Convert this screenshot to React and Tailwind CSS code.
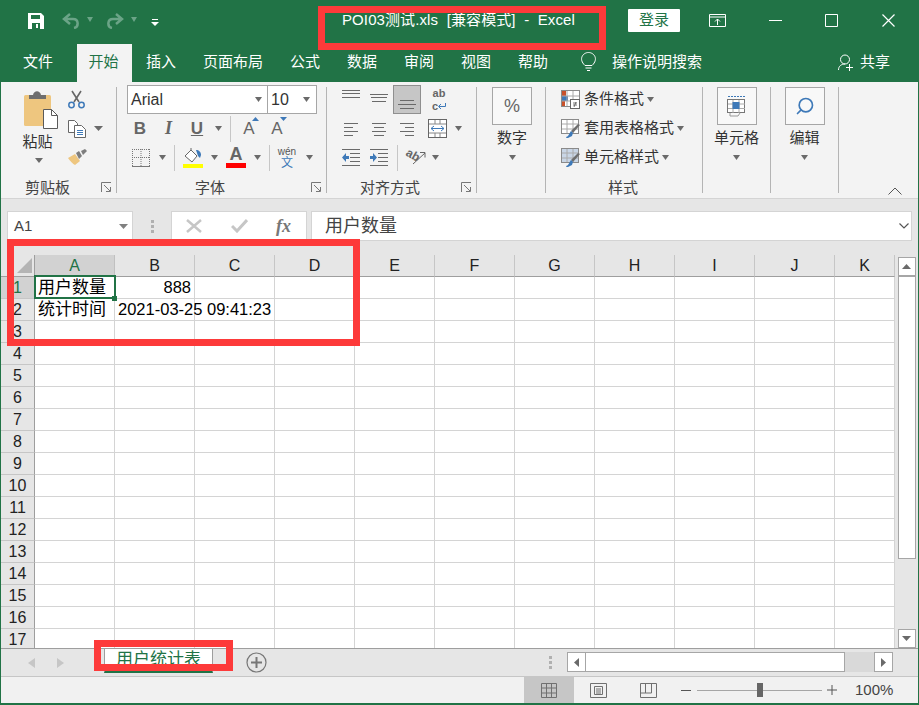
import { Search } from "lucide-react";

const FONT = "font-['Liberation_Sans','Noto_Sans_CJK_SC',sans-serif]";
const COLS = ["A", "B", "C", "D", "E", "F", "G", "H", "I", "J", "K"];
const ROWS = Array.from({ length: 17 }, (_, i) => i + 1);

const Caret = ({ color = "#6a6a6a", w = 9 }) => (
  <svg width={w} height="5" viewBox="0 0 9 5" preserveAspectRatio="none">
    <path d="M0 0h9L4.500 5z" fill={color} />
  </svg>
);

const Slot = ({ className = "", children }) => (
  <div className={`flex h-full shrink-0 items-center justify-center ${className}`}>{children}</div>
);

const Row = ({ className = "", children }) => (
  <div className={`flex h-[29px] items-center ${className}`}>{children}</div>
);

const VSep = ({ className = "" }) => <div className={`h-[26px] w-px shrink-0 bg-[#c6c6c6] ${className}`} />;

const Launcher = () => (
  <svg width="11" height="11" viewBox="0 0 11 11" fill="none" stroke="#777">
    <path d="M.5 10V.5H10M3 3l6 6M9.500 5v4.500H5" />
  </svg>
);

const Group = ({ className = "", label, launcher, labelClass = "", children }) => (
  <div className={`flex h-full shrink-0 ${className}`}>
    <div className="flex min-w-0 flex-1 flex-col">
      <div className="h-[90px]">{children}</div>
      <div className="mt-[4px] flex h-[22px] items-center text-[15px] leading-none text-[#444]">
        <span className={labelClass}>{label}</span>
        {launcher && (
          <span className="mr-[4px] ml-auto flex">
            <Launcher />
          </span>
        )}
      </div>
    </div>
    <div className="mt-[2px] h-[106px] w-px shrink-0 bg-[#b4b4b4]" />
  </div>
);

// three or four text lines drawn in a 29px high row
const Lines = ({ lines }) => (
  <svg width="18" height="29" viewBox="0 0 18 29" stroke="#6a6a6a">
    {lines.map(([a, b, y]) => (
      <path key={y} d={`M${a} ${y + 0.5}H${b}`} />
    ))}
  </svg>
);

const Indent = ({ flip }) => (
  <svg width="18" height="17" viewBox="0 0 18 17">
    <g stroke="#6a6a6a">
      <path d="M0 .5h18M8 4.500h10M8 8.500h10M8 12.500h10M0 16.500h18" />
    </g>
    {flip ? (
      <path d="M0 7h3V4l4 4.500-4 4.500V10H0z" fill="#3e79b8" />
    ) : (
      <path d="M7 7H4V4L0 8.500 4 13v-3h3z" fill="#3e79b8" />
    )}
  </svg>
);

const PasteIcon = () => (
  <svg width="34" height="39" viewBox="0 0 34 39">
    <rect x="0" y="5" width="27" height="31" rx="1.500" fill="#eec67f" />
    <path d="M5 9V5h4c1-5 7-5 8 0h5v4z" fill="#6e6e6e" />
    <path d="M19.500 19.500h8l6 6v13h-14z" fill="#fff" stroke="#5a5a5a" />
    <path d="M27.500 19.500v6h6" fill="none" stroke="#5a5a5a" />
  </svg>
);

const Scissors = () => (
  <svg width="17" height="19" viewBox="0 0 17 19" fill="none">
    <path d="M4 1l7 11M13 1L6 12" stroke="#666" strokeWidth="1.600" />
    <circle cx="3.500" cy="15" r="2.700" stroke="#3e79b8" strokeWidth="1.500" />
    <circle cx="13.500" cy="15" r="2.700" stroke="#3e79b8" strokeWidth="1.500" />
  </svg>
);

const CopyIcon = () => (
  <svg width="18" height="18" viewBox="0 0 18 18" fill="#fff" stroke="#666">
    <path d="M.5.5h6l3 3v9h-9z" />
    <path d="M6.500 5.500h7l4 4v8h-11z" />
    <path d="M9 10.500h6M9 12.500h6M9 14.500h6" stroke="#3e79b8" />
  </svg>
);

const BrushIcon = () => (
  <svg width="19" height="17" viewBox="0 0 19 17">
    <path d="M0 9l7-4 5 7-5 4c-2-1-5-4-7-7z" fill="#eec67f" />
    <path d="M8 4l3-2 3 5-3 3z" fill="#7d7d7d" />
    <path d="M13 2l4-2 2 2-4 4z" fill="#7d7d7d" />
  </svg>
);

const BorderIcon = () => (
  <svg width="18" height="18" viewBox="0 0 18 18" fill="none" stroke="#777" strokeDasharray="1 1">
    <path d="M.5 0v17M9 0v17M17.500 0v17M0 .5h18M0 8.500h18" />
    <path d="M0 17.500h18" strokeDasharray="none" />
  </svg>
);

const FillIcon = () => (
  <svg width="20" height="20" viewBox="0 0 20 20">
    <path d="M2 8l6-6 6 6-5 6z" fill="#fff" stroke="#666" />
    <path d="M8 2V0" stroke="#666" />
    <path d="M13 2c3 0 5 2 5 5l-1 3-2-2z" fill="#3e79b8" />
    <rect x="0" y="16" width="20" height="4" fill="#ffff00" />
  </svg>
);

const TableCellIcon = () => (
  <svg width="19" height="19" viewBox="0 0 19 19">
    <rect x=".5" y=".5" width="18" height="16" fill="#fff" stroke="#8a8a8a" />
    <rect x="1" y="1" width="4" height="5" fill="#c8512b" />
    <rect x="1" y="6" width="6" height="5" fill="#3e79b8" />
    <rect x="1" y="11" width="3" height="5" fill="#c8512b" />
    <path d="M6 1v15M12 1v15M1 6h17M1 11h17" stroke="#aaa" />
    <rect x="9.500" y="9.500" width="9" height="9" fill="#fff" stroke="#666" />
    <path d="M12 13h4M12 15h4M15 12l-2 5" stroke="#555" strokeWidth=".8" />
  </svg>
);

const TableBrushIcon = ({ fill = "#fff" }) => (
  <svg width="19" height="20" viewBox="0 0 19 20">
    <rect x=".5" y=".5" width="17" height="14" fill={fill} stroke="#8a8a8a" />
    <path d="M1 5h16M1 10h16M6 1v13M12 1v13" stroke="#aaa" />
    <path d="M17 5l2 1-7 8-2-2z" fill="#6e6e6e" />
    <path d="M10 12l2 2-1 3-4 2c-1 0-2 0-2-1 2 0 3-3 5-6z" fill="#3e79b8" />
  </svg>
);

const SheetCellsIcon = () => (
  <svg width="19" height="23" viewBox="0 0 19 23" fill="none">
    <path d="M1 1.500h17" stroke="#3e79b8" strokeDasharray="2 1" />
    <rect x=".5" y="4.500" width="17" height="13" fill="#fff" stroke="#777" />
    <path d="M1 9h17M1 13.500h17M6 5v13M12 5v13" stroke="#aaa" />
    <rect x="5.500" y="7" width="7" height="7" fill="#3e79b8" />
    <path d="M3 18v3h8l2-3" stroke="#999" />
  </svg>
);

const StdBox = ({ children }) => (
  <div className="flex h-[38px] w-[40px] items-center justify-center border border-[#a6a6a6] bg-[#f8f8f8]">
    {children}
  </div>
);

const Ribbon = () => (
  <div className="flex h-[117px] border-b border-[#d4d4d4] bg-[#f3f3f3] pt-[3px]">
    {/* 剪贴板 */}
    <Group className="w-[116px]" label="剪贴板" labelClass="ml-[24px]" launcher>
      <div className="flex h-full">
        <div className="ml-[22px] flex w-[35px] flex-col items-center pt-[5px]">
          <PasteIcon />
          <span className="mt-[3px] mr-[6px] text-[15px] leading-[20px] whitespace-nowrap text-[#333]">粘贴</span>
          <span className="mt-[6px] mr-[3px] flex">
            <Caret w={8} />
          </span>
        </div>
        <div className="ml-[10px] flex flex-col">
          <Row>
            <Scissors />
          </Row>
          <Row>
            <CopyIcon />
            <span className="ml-[8px] flex">
              <Caret />
            </span>
          </Row>
          <Row>
            <BrushIcon />
          </Row>
        </div>
      </div>
    </Group>

    {/* 字体 */}
    <Group className="w-[210px]" label="字体" labelClass="ml-[78px]" launcher>
      <Row className="pl-[10px]">
        <div className="flex h-[29px] w-[141px] items-center justify-between border border-[#a6a6a6] bg-white pr-[5px] pl-[3px] text-[16px] text-[#333]">
          Arial
          <Caret w={7} />
        </div>
        <div className="-ml-px flex h-[29px] w-[50px] items-center justify-between border border-[#a6a6a6] bg-white pr-[6px] pl-[3px] text-[16px] text-[#333]">
          10
          <Caret w={7} />
        </div>
      </Row>
      <Row className="pl-[9px]">
        <Slot className="w-[28px] font-['Liberation_Sans'] text-[17px] font-bold text-[#666]">B</Slot>
        <Slot className="w-[29px] font-['Liberation_Serif'] text-[18px] font-bold text-[#666] italic">I</Slot>
        <Slot className="w-[28px] text-[17px] font-bold text-[#666] underline">U</Slot>
        <Slot className="w-[14px]">
          <Caret w={7} />
        </Slot>
        <VSep className="ml-[5px]" />
        <Slot className="ml-[4px] w-[28px]">
          <span className="relative text-[17px] text-[#666]">
            A
            <svg className="absolute top-[1px] -right-[4px]" width="7" height="4" viewBox="0 0 7 4">
              <path d="M0 4l3.500-4L7 4z" fill="#3e79b8" />
            </svg>
          </span>
        </Slot>
        <Slot className="w-[28px]">
          <span className="relative text-[17px] text-[#666]">
            A
            <svg className="absolute top-[1px] -right-[4px]" width="7" height="4" viewBox="0 0 7 4">
              <path d="M0 0l3.500 4L7 0z" fill="#3e79b8" />
            </svg>
          </span>
        </Slot>
      </Row>
      <Row className="pl-[10px]">
        <Slot className="w-[28px]">
          <BorderIcon />
        </Slot>
        <Slot className="w-[14px]">
          <Caret w={7} />
        </Slot>
        <VSep className="ml-[5px]" />
        <Slot className="ml-[4px] w-[28px]">
          <FillIcon />
        </Slot>
        <Slot className="w-[14px]">
          <Caret w={7} />
        </Slot>
        <Slot className="ml-[1px] w-[28px]">
          <div className="flex w-[20px] flex-col items-center">
            <span className="text-[18px] leading-[15px] font-bold text-[#666]">A</span>
            <span className="mt-[1px] h-[5px] w-[20px] bg-[#ff0000]" />
          </div>
        </Slot>
        <Slot className="w-[14px]">
          <Caret w={7} />
        </Slot>
        <VSep className="ml-[5px]" />
        <Slot className="ml-[3px] w-[28px]">
          <div className="flex flex-col items-center leading-none">
            <span className="text-[10px] text-[#555]">wén</span>
            <span className="text-[12px] text-[#3e79b8]">文</span>
          </div>
        </Slot>
        <Slot className="w-[16px]">
          <Caret w={7} />
        </Slot>
      </Row>
    </Group>

    {/* 对齐方式 */}
    <Group className="w-[150px]" label="对齐方式" labelClass="ml-[33px]" launcher>
      <Row className="pl-[10px]">
        <Slot className="w-[28px]">
          <Lines lines={[[0, 18, 5], [0, 18, 8], [0, 18, 12]]} />
        </Slot>
        <Slot className="w-[28px]">
          <Lines lines={[[0, 18, 9], [1, 17, 12], [2, 16, 16]]} />
        </Slot>
        <Slot className="w-[28px] border border-[#8f8f8f] bg-[#c6c6c6]">
          <Lines lines={[[2, 16, 15], [0, 18, 19], [2, 16, 23]]} />
        </Slot>
        <Slot className="ml-[4px] w-[28px]">
          <div className="flex flex-col items-center text-[11px] leading-[13px] font-bold text-[#666]">
            <span>ab</span>
            <span className="flex items-center">
              c
              <svg width="8" height="7" viewBox="0 0 8 7" fill="none" stroke="#3e79b8">
                <path d="M7.500 0v3.500H1M3 1L.5 3.500 3 6" />
              </svg>
            </span>
          </div>
        </Slot>
      </Row>
      <Row className="pl-[10px]">
        <Slot className="w-[28px]">
          <Lines lines={[[2, 16, 9], [2, 11, 13], [2, 16, 17], [2, 11, 21]]} />
        </Slot>
        <Slot className="w-[28px]">
          <Lines lines={[[2, 16, 9], [4, 14, 13], [2, 16, 17], [4, 14, 21]]} />
        </Slot>
        <Slot className="w-[28px]">
          <Lines lines={[[2, 16, 9], [7, 16, 13], [2, 16, 17], [7, 16, 21]]} />
        </Slot>
        <Slot className="ml-[2px] w-[28px]">
          <svg width="19" height="19" viewBox="0 0 19 19" fill="none">
            <rect x=".5" y=".5" width="18" height="18" fill="#fff" stroke="#666" />
            <path d="M1 5h17M1 14h17M7 1v4M12 1v4M7 14v4M12 14v4" stroke="#888" />
            <path d="M3 9.500h13M6 7L3 9.500 6 12M13 7l3 2.500-3 2.500" stroke="#3e79b8" />
          </svg>
        </Slot>
        <Slot className="w-[14px]">
          <Caret w={7} />
        </Slot>
      </Row>
      <Row className="pl-[10px]">
        <Slot className="w-[28px]">
          <Indent />
        </Slot>
        <Slot className="w-[28px]">
          <Indent flip />
        </Slot>
        <VSep className="ml-[4px]" />
        <Slot className="ml-[6px] w-[24px]">
          <span className="-mt-[5px] rotate-[30deg] text-[12px] leading-none font-bold text-[#666]">ab</span>
          <svg className="-ml-[9px]" width="14" height="14" viewBox="0 0 14 14" fill="none" stroke="#666">
            <path d="M1 13L13 2M8 1.500h5v5" />
          </svg>
        </Slot>
        <Slot className="w-[14px]">
          <Caret w={7} />
        </Slot>
      </Row>
    </Group>

    {/* 数字 */}
    <Group className="w-[69px]">
      <div className="flex flex-col items-center pt-[2px] pl-[2px]">
        <StdBox>
          <span className="text-[18px] text-[#666]">%</span>
        </StdBox>
        <span className="mt-[3px] text-[15px] leading-[20px] text-[#333]">数字</span>
        <span className="mt-[7px] flex">
          <Caret w={7} />
        </span>
      </div>
    </Group>

    {/* 样式 */}
    <Group className="w-[157px]" label="样式" labelClass="ml-[62px]">
      <Row className="pl-[15px] text-[15px] text-[#333]">
        <TableCellIcon />
        <span className="mr-[3px] ml-[4px]">条件格式</span>
        <Caret w={7} />
      </Row>
      <Row className="pl-[15px] text-[15px] text-[#333]">
        <TableBrushIcon />
        <span className="mr-[3px] ml-[4px]">套用表格格式</span>
        <Caret w={7} />
      </Row>
      <Row className="pl-[15px] text-[15px] text-[#333]">
        <TableBrushIcon fill="#c9d6e6" />
        <span className="mr-[3px] ml-[4px]">单元格样式</span>
        <Caret w={7} />
      </Row>
    </Group>

    {/* 单元格 */}
    <Group className="w-[68px]">
      <div className="flex flex-col items-center pt-[2px]">
        <StdBox>
          <SheetCellsIcon />
        </StdBox>
        <span className="mt-[3px] text-[15px] leading-[20px] text-[#333]">单元格</span>
        <span className="mt-[7px] flex">
          <Caret w={7} />
        </span>
      </div>
    </Group>

    {/* 编辑 */}
    <Group className="w-[68px]">
      <div className="flex flex-col items-center pt-[2px]">
        <StdBox>
          <Search size={20} color="#3e79b8" strokeWidth={2} className="-scale-x-100" />
        </StdBox>
        <span className="mt-[3px] text-[15px] leading-[20px] text-[#333]">编辑</span>
        <span className="mt-[7px] flex">
          <Caret w={7} />
        </span>
      </div>
    </Group>

    <div className="flex flex-1 items-end justify-end pr-[16px] pb-[3px]">
      <svg width="14" height="8" viewBox="0 0 14 8" fill="none" stroke="#555">
        <path d="M.5 7.500L7 1l6.500 6.500" />
      </svg>
    </div>
  </div>
);

const Tab = ({ className = "", children }) => (
  <div className={`flex h-full shrink-0 items-center justify-center pb-[2px] ${className}`}>{children}</div>
);

const Sheet = () => (
  <div className="flex h-[405px] overflow-hidden">
    <div className="w-[894px] shrink-0 overflow-hidden bg-white">
      <div className="h-[12px] bg-[#e6e6e6]" />
      <div className="grid grid-cols-[34px_repeat(10,80px)_60px]">
        <div className="flex h-[22px] items-end justify-end border-r border-b border-[#9e9e9e] bg-[#e6e6e6] pr-[2px] pb-[3px]">
          <svg width="15" height="15" viewBox="0 0 15 15">
            <path d="M15 0v15H0z" fill="#b4b4b4" />
          </svg>
        </div>
        {COLS.map((c, i) => (
          <div
            key={c}
            className={`flex h-[22px] items-center justify-center border-b border-[#9e9e9e] pt-[1px] text-[16px] ${
              i === 0
                ? "border-r border-r-[#c0c0c0] bg-[#d2d2d2] text-[#217346]"
                : "border-r border-r-[#c6c6c6] bg-[#e6e6e6] text-[#222]"
            }`}
          >
            {c}
          </div>
        ))}
        {ROWS.map((r) => (
          <div key={r} className="contents">
            <div
              className={`flex h-[22px] items-center justify-center border-r border-b border-r-[#9e9e9e] border-b-[#c6c6c6] pt-[1px] text-[16px] ${
                r === 1 ? "bg-[#d2d2d2] text-[#217346]" : "bg-[#e6e6e6] text-[#222]"
              }`}
            >
              {r}
            </div>
            {COLS.map((c) => (
              <div
                key={c}
                className="relative flex h-[22px] items-center border-r border-b border-[#d4d4d4] text-[16.500px] whitespace-nowrap text-black"
              >
                {r === 1 && c === "A" && (
                  <>
                    <span className="pl-[3px] text-[17px]">用户数量</span>
                    <span className="absolute -top-[2px] -right-[2px] -bottom-[1px] -left-[1px] z-10 border-2 border-[#217346]" />
                    <span className="absolute -right-[3px] -bottom-[3px] z-10 h-[5px] w-[5px] bg-[#217346]" />
                  </>
                )}
                {r === 1 && c === "B" && <span className="ml-auto pr-[3px]">888</span>}
                {r === 2 && c === "A" && <span className="pl-[3px] text-[17px]">统计时间</span>}
                {r === 2 && c === "B" && <span className="pl-[3px]">2021-03-25 09:41:23</span>}
              </div>
            ))}
          </div>
        ))}
      </div>
    </div>
    <div className="flex flex-1 flex-col items-center bg-[#e6e6e6] pt-[14px]">
      <div className="flex h-[19px] w-[18px] items-center justify-center border border-[#a6a6a6] bg-white">
        <svg width="9" height="5" viewBox="0 0 9 5">
          <path d="M0 5h9L4.500 0z" fill="#6a6a6a" />
        </svg>
      </div>
      <div className="h-[283px] w-[18px] border border-[#a6a6a6] bg-white" />
      <div className="mt-auto flex h-[19px] w-[18px] items-center justify-center border border-[#a6a6a6] bg-white">
        <Caret />
      </div>
    </div>
  </div>
);

const SheetTabs = () => (
  <div className="flex h-[29px] border-t border-b border-t-[#9e9e9e] border-b-[#c6c6c6] bg-[#e6e6e6]">
    <div className="flex w-[103px] shrink-0 items-center pl-[27px]">
      <svg width="7" height="10" viewBox="0 0 7 10">
        <path d="M7 0v10L0 5z" fill="#c6c6c6" />
      </svg>
      <svg className="ml-[22px]" width="7" height="10" viewBox="0 0 7 10">
        <path d="M0 0v10l7-5z" fill="#c6c6c6" />
      </svg>
    </div>
    <div className="flex h-[24px] w-[109px] shrink-0 items-center justify-center border-x border-b-2 border-x-[#9e9e9e] border-b-[#217346] bg-white text-[17px] text-[#217346]">
      用户统计表
    </div>
    <div className="flex w-[327px] shrink-0 items-center pl-[33px]">
      <svg width="21" height="21" viewBox="0 0 21 21" fill="none" stroke="#777">
        <circle cx="10.500" cy="10.500" r="9.500" strokeWidth="1.200" />
        <path d="M5 10.500h11M10.500 5v11" strokeWidth="2" />
      </svg>
    </div>
    <div className="flex w-[20px] shrink-0 flex-col items-center justify-center gap-[2px]">
      <span className="h-[3px] w-[3px] bg-[#b0b0b0]" />
      <span className="h-[3px] w-[3px] bg-[#b0b0b0]" />
      <span className="h-[3px] w-[3px] bg-[#b0b0b0]" />
    </div>
    <div className="mt-[3px] ml-[7px] flex h-[20px] w-[326px] shrink-0 bg-[#d9d9d9]">
      <div className="flex w-[19px] items-center justify-center border border-[#a6a6a6] bg-white">
        <svg width="5" height="9" viewBox="0 0 5 9">
          <path d="M5 0v9L0 4.500z" fill="#6a6a6a" />
        </svg>
      </div>
      <div className="w-[259px] border-y border-r border-[#a6a6a6] bg-white" />
      <div className="ml-auto flex w-[19px] items-center justify-center border border-[#a6a6a6] bg-white">
        <svg width="5" height="9" viewBox="0 0 5 9">
          <path d="M0 0v9l5-4.500z" fill="#6a6a6a" />
        </svg>
      </div>
    </div>
  </div>
);

const StatusBar = () => (
  <div className="flex h-[26px] bg-[#f1f1f1]">
    <div className="ml-[523px] flex w-[50px] items-center justify-center bg-[#c6c6c6]">
      <svg width="16" height="15" viewBox="0 0 16 15" fill="none" stroke="#707070">
        <path d="M.5.5h15v14H.5zM.5 5h15M.5 10h15M5.500 0v15M10.500 0v15" />
      </svg>
    </div>
    <div className="flex w-[49px] items-center justify-center">
      <svg width="17" height="15" viewBox="0 0 17 15" fill="none" stroke="#707070">
        <path d="M.5.500h16v14H.5zM4.500 3.500h8v8h-8zM6 6h5M6 8h5M6 10h5" />
      </svg>
    </div>
    <div className="flex w-[50px] items-center justify-center">
      <svg width="17" height="15" viewBox="0 0 17 15" fill="none" stroke="#707070">
        <path d="M.5 14.500V.5h16v14zM.5 10h11V.5M5.500 0v10" />
      </svg>
    </div>
    <div className="ml-[8px] flex items-center">
      <span className="h-px w-[10px] bg-[#555]" />
      <div className="relative ml-[6px] flex h-full w-[125px] items-center">
        <span className="h-px w-full bg-[#a6a6a6]" />
        <span className="absolute left-[60px] h-[14px] w-[6px] bg-[#666]" />
      </div>
      <svg className="ml-[5px]" width="10" height="10" viewBox="0 0 10 10" stroke="#555">
        <path d="M0 5h10M5 0v10" />
      </svg>
    </div>
    <span className="ml-[18px] flex items-center text-[15px] text-[#444]">100%</span>
  </div>
);

export default function App() {
  return (
    <div className={`relative h-[705px] w-[919px] overflow-hidden border-x border-b border-[#217346] bg-[#217346] ${FONT}`}>
      {/* title bar */}
      <div className="flex h-[44px] items-start text-white">
        <div className="mt-[13px] ml-[27px] flex w-[16px]">
          <svg width="16" height="16" viewBox="0 0 16 16">
            <path d="M0 0h13l3 3v13H0z" fill="#fff" />
            <rect x="3" y="2" width="9" height="4" fill="#217346" />
            <rect x="4" y="10" width="8" height="6" fill="#217346" />
            <rect x="8" y="11" width="2" height="4" fill="#fff" />
          </svg>
        </div>
        <svg className="mt-[13px] ml-[18px]" width="18" height="16" viewBox="0 0 18 16" fill="none" stroke="#6ba487" strokeWidth="2.500">
          <path d="M8 1L2 6l6 5M2 6h9c6 0 6 8 1 9" />
        </svg>
        <span className="mt-[17px] ml-[7px] flex">
          <Caret color="#6ba487" w={6} />
        </span>
        <svg className="mt-[13px] ml-[13px]" width="18" height="16" viewBox="0 0 18 16" fill="none" stroke="#6ba487" strokeWidth="2.500">
          <path d="M10 1l6 5-6 5M16 6H7c-6 0-6 8-1 9" />
        </svg>
        <span className="mt-[17px] ml-[7px] flex">
          <Caret color="#6ba487" w={6} />
        </span>
        <svg className="mt-[19px] ml-[14px]" width="8" height="7" viewBox="0 0 8 7" fill="#fff">
          <path d="M1 0h6v1H1zM0 3h8L4 7z" />
        </svg>
        <span className="mt-[10px] ml-[183px] text-[15px] leading-[20px] tracking-[0.1px] whitespace-pre">POI03测试.xls  [兼容模式]  -  Excel</span>
        <div className="absolute top-[9px] left-[627px] flex h-[23px] w-[52px] items-center justify-center rounded-[1px] bg-white text-[15px] text-[#217346]">
          登录
        </div>
        <div className="ml-auto flex h-[40px] items-center">
          <svg width="17" height="13" viewBox="0 0 17 13" fill="none" stroke="#fff">
            <path d="M.5.500h16v12H.5zM.5 3h16M8.500 11V5M6 7.500L8.500 5 11 7.500" />
          </svg>
          <svg className="ml-[43px]" width="13" height="1" viewBox="0 0 13 1" stroke="#fff">
            <path d="M0 .5h13" />
          </svg>
          <svg className="ml-[43px]" width="13" height="13" viewBox="0 0 13 13" fill="none" stroke="#fff">
            <path d="M.5.500h12v12H.5z" />
          </svg>
          <svg className="mr-[23px] ml-[44px]" width="13" height="13" viewBox="0 0 13 13" fill="none" stroke="#fff" strokeWidth="1.200">
            <path d="M.5.500l12 12M12.500.5l-12 12" />
          </svg>
        </div>
      </div>

      {/* ribbon tabs */}
      <div className="flex h-[38px] text-[15px] text-white">
        <Tab className="w-[76px] pr-[2px]">文件</Tab>
        <Tab className="w-[55px] bg-[#f3f3f3] pr-[2px] text-[#217346]">开始</Tab>
        <Tab className="w-[58px]">插入</Tab>
        <Tab className="w-[86px]">页面布局</Tab>
        <Tab className="w-[58px]">公式</Tab>
        <Tab className="w-[57px] pr-[1px]">数据</Tab>
        <Tab className="w-[57px] pr-[1px]">审阅</Tab>
        <Tab className="w-[57px] pr-[1px]">视图</Tab>
        <Tab className="w-[57px] pr-[1px]">帮助</Tab>
        <Tab className="ml-[18px]">
          <svg width="17" height="20" viewBox="0 0 17 20" fill="none" stroke="#fff">
            <path d="M5 13.500C-2 7 3 .5 8.500.5S19 7 12 13.500zM5.500 16h6M7 18.500h3" />
          </svg>
        </Tab>
        <Tab className="ml-[15px]">操作说明搜索</Tab>
        <Tab className="ml-auto pr-[28px]">
          <svg className="mr-[7px]" width="15" height="17" viewBox="0 0 15 17" fill="none" stroke="#fff">
            <circle cx="7" cy="5.500" r="4.500" />
            <path d="M.5 16c0-4 3-6 6.500-6M8 13.500h7M11.500 10v7" />
          </svg>
          共享
        </Tab>
      </div>

      <Ribbon />

      {/* formula bar */}
      <div className="flex h-[44px] items-start bg-[#e6e6e6] pt-[12px] pr-[6px] pl-[6px]">
        <div className="flex h-[30px] w-[126px] items-center justify-between border border-[#d4d4d4] bg-white pr-[4px] pl-[6px] text-[15px] text-[#444]">
          A1
          <Caret color="#808080" />
        </div>
        <div className="flex h-[30px] w-[38px] flex-col items-center justify-center gap-[2px]">
          <span className="h-[3px] w-[3px] bg-[#b0b0b0]" />
          <span className="h-[3px] w-[3px] bg-[#b0b0b0]" />
          <span className="h-[3px] w-[3px] bg-[#b0b0b0]" />
        </div>
        <div className="flex h-[30px] w-[136px] items-center border border-[#d4d4d4] bg-white pl-[14px]">
          <svg width="16" height="14" viewBox="0 0 16 14" stroke="#c6c6c6" strokeWidth="2.500">
            <path d="M1 1l14 12M15 1L1 13" />
          </svg>
          <svg className="ml-[29px]" width="17" height="14" viewBox="0 0 17 14" fill="none" stroke="#c6c6c6" strokeWidth="3">
            <path d="M1 7l5 5L16 1" />
          </svg>
          <span className="ml-[28px] font-['Liberation_Serif'] text-[18px] font-bold text-[#777] italic">fx</span>
        </div>
        <div className="ml-[4px] flex h-[30px] flex-1 items-center justify-between border border-[#d4d4d4] bg-white pr-[2px] pl-[13px] text-[18px] text-[#444]">
          用户数量
          <svg width="10" height="6" viewBox="0 0 10 6" fill="none" stroke="#555" strokeWidth="1.200">
            <path d="M.5.5L5 5 9.500.5" />
          </svg>
        </div>
      </div>

      <Sheet />
      <SheetTabs />
      <StatusBar />

      {/* red annotation boxes drawn over the screenshot */}
      <div className="absolute top-[6px] left-[317px] z-20 h-[44px] w-[288px] border-[7px] border-[#fd3a3a]" />
      <div className="absolute top-[239px] left-[6px] z-20 h-[107px] w-[353px] border-[7px] border-[#fd3a3a]" />
      <div className="absolute top-[640px] left-[93px] z-20 h-[31px] w-[139px] border-[7px] border-[#fd3a3a]" />
    </div>
  );
}
